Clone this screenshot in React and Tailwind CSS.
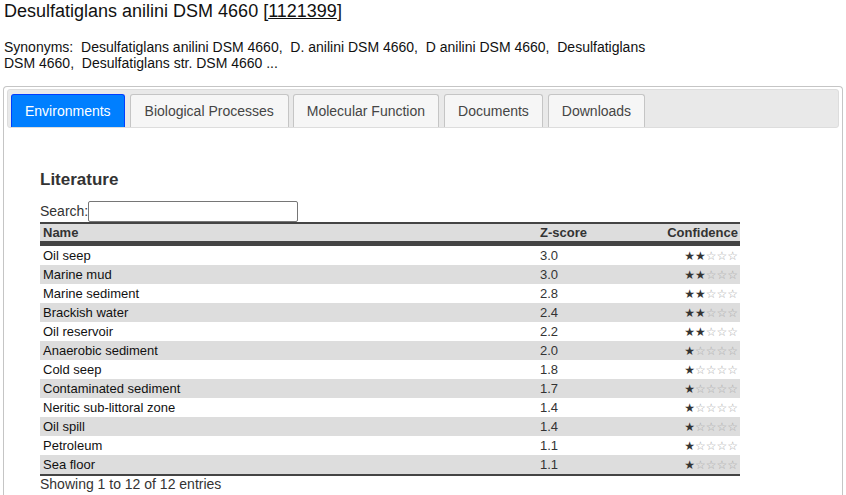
import React from 'react';

const ROWS = [
  ['Oil seep', '3.0', 2],
  ['Marine mud', '3.0', 2],
  ['Marine sediment', '2.8', 2],
  ['Brackish water', '2.4', 2],
  ['Oil reservoir', '2.2', 2],
  ['Anaerobic sediment', '2.0', 1],
  ['Cold seep', '1.8', 1],
  ['Contaminated sediment', '1.7', 1],
  ['Neritic sub-littoral zone', '1.4', 1],
  ['Oil spill', '1.4', 1],
  ['Petroleum', '1.1', 1],
  ['Sea floor', '1.1', 1],
];

const TABS = [
  ['Environments', 'px-[13px]'],
  ['Biological Processes', 'ml-[5px] px-[14px]'],
  ['Molecular Function', 'ml-[4px] px-[13px]'],
  ['Documents', 'ml-[5px] px-[13px]'],
  ['Downloads', 'ml-[5px] px-[13px]'],
];

function Stars({ n }) {
  return (
    <span
      className="inline-block h-[15px] align-top text-[12px] leading-[16px]"
      style={{ fontFamily: '"DejaVu Sans", sans-serif' }}
    >
      {[0, 1, 2, 3, 4].map((i) =>
        i < n ? (
          <span key={i} className="text-[#333]">★</span>
        ) : (
          <span key={i} className="text-[#aaa]">☆</span>
        )
      )}
    </span>
  );
}

export default function App() {
  return (
    <div className="min-h-[495px] bg-white px-[3px] text-[#222]" style={{ fontFamily: '"Liberation Sans", Arial, sans-serif' }}>
      <h1 className="pl-[1px] pt-[1px] text-[18px] leading-[21px] text-[#111]">
        Desulfatiglans anilini DSM 4660 [<span className="underline">1121399</span>]
      </h1>
      <p className="mt-[17px] w-[660px] pl-[1px] text-[14px] leading-[16px] text-[#111]">
        Synonyms:&nbsp; Desulfatiglans anilini DSM 4660,&nbsp; D. anilini DSM 4660,&nbsp; D anilini DSM 4660,&nbsp; Desulfatiglans DSM 4660,&nbsp; Desulfatiglans str. DSM 4660 ...
      </p>

      <div className="mt-[15px] h-[420px] w-[840px] rounded-t-[4px] border border-b-0 border-[#c5c5c5] px-[3px] pt-[2px]">
        <div className="flex h-[39px] items-end rounded-[3px] border border-[#dddddd] bg-[#e9e9e9] px-[3px]">
          {TABS.map(([t, px], i) => (
            <div
              key={t}
              className={
                i === 0
                  ? `flex h-[33px] items-center rounded-t-[3px] border border-b-0 border-[#003eff] bg-[#007fff] ${px} text-[14px] text-white`
                  : `flex h-[33px] items-center rounded-t-[3px] border border-b-0 border-[#c5c5c5] bg-[#f6f6f6] ${px} text-[14px] text-[#454545]`
              }
            >
              {t}
            </div>
          ))}
        </div>

        <div className="pl-[33px] pt-[42px]">
          <h2 className="text-[17px] font-bold leading-[20px] text-[#333]">Literature</h2>
          <div className="mt-[11px] flex items-center text-[14px] text-[#333]">
            <span>Search:</span>
            <input className="h-[21px] w-[210px] rounded-[2px] border border-[#767676] bg-white outline-none" />
          </div>
          <table className="w-[700px] border-separate border-spacing-0 text-[13px] leading-[15px]">
            <thead>
              <tr className="bg-[#dddddd] text-[#333]">
                <th className="h-[24px] w-[497px] border-t-2 border-b-[5px] border-[#444] px-[3px] py-0 text-left font-bold">Name</th>
                <th className="h-[24px] border-t-2 border-b-[5px] border-[#444] px-[3px] py-0 text-left font-bold">Z-score</th>
                <th className="h-[24px] border-t-2 border-b-[5px] border-[#444] px-[2px] py-0 text-right font-bold">Confidence</th>
              </tr>
            </thead>
            <tbody>
              {ROWS.map(([name, z, s], i) => {
                const last = i === ROWS.length - 1;
                const bg = i % 2 === 1 ? 'bg-[#dddddd]' : 'bg-white';
                return (
                  <tr key={name} className={bg}>
                    <td className={last ? 'h-[21px] border-b-2 border-[#444] px-[3px] py-0 text-[#111]' : 'h-[19px] px-[3px] py-0 text-[#111]'}>{name}</td>
                    <td className={last ? 'h-[21px] border-b-2 border-[#444] px-[3px] py-0 text-[#333]' : 'h-[19px] px-[3px] py-0 text-[#333]'}>{z}</td>
                    <td className={last ? 'h-[21px] border-b-2 border-[#444] px-[2px] py-0 text-right' : 'h-[19px] px-[2px] py-0 text-right'}>
                      <Stars n={s} />
                    </td>
                  </tr>
                );
              })}
            </tbody>
          </table>
          <div className="mt-0 text-[14px] leading-[16px] text-[#333]">Showing 1 to 12 of 12 entries</div>
        </div>
      </div>
    </div>
  );
}
